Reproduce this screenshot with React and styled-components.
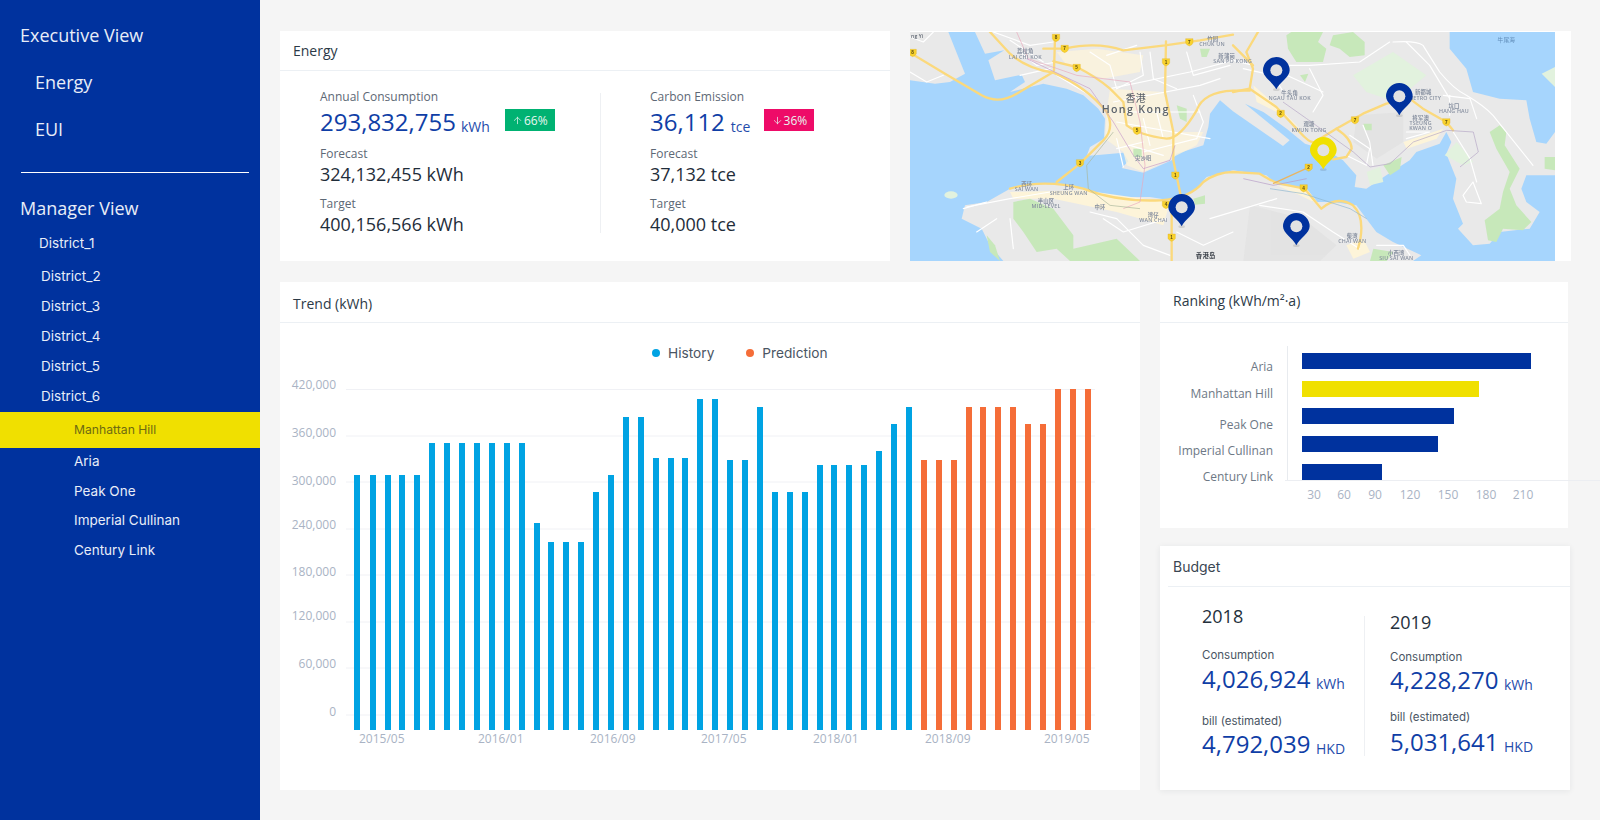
import React from "react";
import styled, { createGlobalStyle } from "styled-components";
import { ArrowUp, ArrowDown } from "lucide-react";

const BLUE = "#00329e";
const YELLOW = "#f0e000";
const SANS = '"Open Sans", "Noto Sans CJK SC", sans-serif';
const UI = 'Inter, "Noto Sans CJK SC", sans-serif';

const GlobalStyle = createGlobalStyle`
  html, body {
    margin: 0;
    padding: 0;
    background: #f5f5f5;
    overflow: hidden;
  }
`;

const Page = styled.div`
  display: flex;
  width: 1600px;
  height: 820px;
  font-family: ${SANS};
`;

const Sidebar = styled.nav`
  width: 260px;
  flex: none;
  box-sizing: border-box;
  padding-top: 12px;
  background: ${BLUE};
  color: #e8edf8;
`;

const NavHead = styled.div`
  margin-left: ${(p) => p.$indent}px;
  font-size: 18px;
  line-height: ${(p) => p.$height}px;
  margin-top: ${(p) => p.$top || 0}px;
`;

const NavRule = styled.hr`
  margin: 19px 11px 0 21px;
  border: none;
  height: 1px;
  background: #ffffff;
`;

const NavItem = styled.div`
  font-family: ${UI};
  font-size: 13.5px;
  line-height: ${(p) => p.$height || 30}px;
  margin-top: ${(p) => p.$top || 0}px;
  padding-left: ${(p) => p.$indent}px;
`;

const NavSub = styled.div`
  font-family: ${UI};
  font-size: 13.5px;
  line-height: ${(p) => p.$height || 30}px;
  padding-left: 74px;
`;

const NavActive = styled(NavSub)`
  margin: 1px 0 -2px;
  font-size: 12.2px;
  background: ${YELLOW};
  color: #6e6a12;
`;

const Main = styled.main`
  flex: 1;
  display: flex;
  flex-direction: column;
  gap: 21px;
  padding: 31px 0 0 20px;
`;

const Row = styled.div`
  display: flex;
  gap: 20px;
`;

const Card = styled.section`
  box-sizing: border-box;
  width: ${(p) => p.$width}px;
  height: ${(p) => p.$height}px;
  background: #ffffff;
`;

const ShadowCard = styled(Card)`
  box-shadow: 0 1px 6px rgba(40, 50, 70, 0.08);
`;

const CardTitle = styled.h2`
  box-sizing: border-box;
  height: ${(p) => p.$height}px;
  margin: 0 0 0 ${(p) => p.$inset || 0}px;
  padding: ${(p) => p.$pad}px 0 0 ${(p) => 13 - (p.$inset || 0)}px;
  border-bottom: 1px solid #ecf0f4;
  font-size: 14px;
  font-weight: 400;
  line-height: 20px;
  color: #2c3a47;
`;

const BudgetTitle = styled(CardTitle)`
  font-family: ${UI};
  font-size: 14px;
  color: #3a4652;
`;

const EnergyBody = styled.div`
  display: grid;
  grid-template-columns: 280px 1px 1fr;
  padding: 18px 0 0 40px;
`;

const Split = styled.div`
  width: 1px;
  margin-top: ${(p) => p.$top}px;
  height: 140px;
  background: #eef0f3;
`;

const StatCol = styled.div`
  padding-left: ${(p) => p.$indent || 0}px;
`;

const StatLabel = styled.div`
  margin-top: ${(p) => p.$top || 0}px;
  font-size: 12px;
  line-height: 16px;
  color: #5d6875;
`;

const StatLine = styled.div`
  display: flex;
  align-items: flex-start;
  margin-top: 2px;
  height: 30px;
`;

const BigValue = styled.span`
  font-size: 24px;
  line-height: 30px;
  color: #0f3ea6;
`;

const Unit = styled.span`
  margin-left: ${(p) => p.$gap || 5.5}px;
  margin-top: 5px;
  font-size: 14px;
  line-height: 30px;
  color: #1f4cab;
`;

const Badge = styled.span`
  display: flex;
  align-items: center;
  justify-content: center;
  gap: 1px;
  width: 50px;
  height: 22px;
  margin-left: ${(p) => p.$gap}px;
  margin-top: 2px;
  background: ${(p) => p.$bg};
  color: #e8f6f0;
  font-size: 12px;
`;

const PlainValue = styled.div`
  font-size: 18px;
  line-height: 24px;
  color: #1f2d3a;
`;

const MapCard = styled(Card)`
  padding-right: 16px;
`;

const MapSvg = styled.svg`
  display: block;
  width: 645px;
  height: 229px;
  margin-top: 1px;
  filter: blur(0.55px);
`;

const Side = styled.div`
  display: flex;
  flex-direction: column;
  gap: 18px;
`;

const Legend = styled.div`
  display: flex;
  align-items: center;
  padding: 21px 0 0 372px;
  height: 18px;
  font-family: ${UI};
  font-size: 13.7px;
  line-height: 18px;
  color: #4a5563;
`;

const LegendDot = styled.i`
  width: 8px;
  height: 8px;
  border-radius: 50%;
  margin: 0 8px 0 ${(p) => p.$gap || 0}px;
  background: ${(p) => p.$color};
`;

const ChartSvg = styled.svg`
  display: block;
  overflow: visible;
`;

const AxisText = styled.text`
  font-family: ${SANS};
  font-size: 12px;
  fill: #a9b3c4;
  dominant-baseline: central;
`;

const RankText = styled(AxisText)`
  fill: #6d7885;
  text-anchor: end;
`;

const BudgetBody = styled.div`
  display: grid;
  grid-template-columns: 162px 1px 1fr;
  padding-left: 42px;
`;

const BudgetYear = styled.div`
  margin-top: ${(p) => p.$top}px;
  font-size: 18px;
  line-height: 24px;
  color: #24303c;
`;

const BudgetLabel = styled.div`
  margin-top: ${(p) => p.$top}px;
  font-family: ${UI};
  font-size: 11.5px;
  line-height: 16px;
  color: #4a5563;
`;

const BudgetValue = styled.div`
  display: flex;
  align-items: flex-start;
  margin-top: ${(p) => p.$top || 0}px;
  height: 30px;
`;

const ShieldText = styled.text`
  font-family: "Liberation Sans", sans-serif;
  font-size: 14px;
  font-weight: 700;
  fill: #5a4a10;
  text-anchor: middle;
`;

const MapLabel = styled.text`
  font-family: ${SANS};
  font-size: ${(p) => p.$size || 16}px;
  font-weight: ${(p) => p.$weight || 600};
  letter-spacing: ${(p) => p.$spacing || 0.6}px;
  fill: ${(p) => p.$color || "#8790a0"};
  text-anchor: ${(p) => p.$anchor || "middle"};
`;

const districts = ["District_3", "District_4", "District_5", "District_6"];

const trendBars = [
  [354, 475], [370, 475], [385, 475], [399, 475], [414, 475],
  [429, 443], [444, 443], [459, 443], [474, 443], [489, 443], [504, 443], [519, 443],
  [534, 523], [548, 542], [563, 542], [578, 542], [593, 492], [608, 475],
  [623, 417], [638, 417], [653, 458], [668, 458], [682, 458], [697, 399], [712, 399],
  [727, 460], [742, 460], [757, 407], [772, 492], [787, 492], [802, 492],
  [817, 465], [831, 465], [846, 465], [861, 465], [876, 451], [891, 424], [906, 407],
];

const predictionBars = [
  [921, 460], [936, 460], [951, 460], [966, 407], [980, 407], [995, 407], [1010, 407],
  [1025, 424], [1040, 424], [1055, 389], [1070, 389], [1085, 389],
];

const yTicks = [
  ["420,000", 389.5, 384], ["360,000", 436, 432], ["300,000", 482, 480], ["240,000", 529, 524],
  ["180,000", 575, 571], ["120,000", 622, 615], ["60,000", 668, 663], ["0", 715, 711],
];

const xTicks = [
  ["2015/05", 359], ["2016/01", 478], ["2016/09", 590], ["2017/05", 701],
  ["2018/01", 813], ["2018/09", 925], ["2019/05", 1044],
];

const rankBars = [
  ["Aria", 353, 1531, BLUE, 366],
  ["Manhattan Hill", 381, 1479, YELLOW, 393],
  ["Peak One", 408, 1454, BLUE, 424],
  ["Imperial Cullinan", 436, 1438, BLUE, 450],
  ["Century Link", 464, 1382, BLUE, 476],
];

const rankTicks = [[30, 1314], [60, 1344], [90, 1375], [120, 1410], [150, 1448], [180, 1486], [210, 1523]];

const shields = [
  [8, 438, 17], [8, 8, 62], [7, 464, 50], [7, 838, 30], [5, 500, 107], [1, 768, 90],
  [5, 681, 296], [3, 510, 393], [1, 796, 430], [4, 768, 518], [1, 785, 616],
  [2, 1112, 245], [7, 1335, 264], [7, 1609, 270], [2, 1196, 406], [4, 1181, 468],
];

const labels = [
  ["荔枝角", 346, 64], ["LAI CHI KOK", 346, 82], ["竹园", 908, 27], ["CHUK UN", 906, 43],
  ["新蒲岗", 950, 79], ["SAN PO KONG", 968, 94], ["尖沙咀", 700, 383], ["西环", 350, 462],
  ["SAI WAN", 350, 478], ["上环", 476, 471], ["SHEUNG WAN", 476, 488], ["半山区", 408, 514],
  ["MID-LEVEL", 408, 529], ["中环", 570, 530], ["湾仔", 730, 554], ["WAN CHAI", 730, 570],
  ["牛头角", 1139, 189], ["NGAU TAU KOK", 1139, 204], ["观塘", 1197, 283], ["KWUN TONG", 1197, 299],
  ["新都城", 1540, 187], ["METRO CITY", 1544, 203], ["坑口", 1632, 229], ["HANG HAU", 1632, 244],
  ["将军澳", 1532, 263], ["TSEUNG", 1532, 279], ["KWAN O", 1532, 294], ["柴湾", 1327, 619],
  ["CHAI WAN", 1327, 634], ["小西湾", 1459, 669], ["SIU SAI WAN", 1459, 684],
];

const yellowRoads = [
  "M0 62 L105 125 L215 190 Q265 218 320 185 L430 120",
  "M240 0 L300 65 Q350 110 430 122 Q530 165 590 240 Q615 290 580 325 L510 395 L440 450",
  "M400 50 L465 50 Q560 28 640 55 L765 40 L870 25 L969 8",
  "M435 20 L432 115",
  "M768 28 L765 180 L790 300 L790 385 L812 490",
  "M430 88 L500 105 Q560 135 600 170 L640 210 L650 280 Q690 310 770 320 Q810 320 860 235 Q880 180 969 176 L1019 176",
  "M300 470 Q400 440 520 470 Q620 510 750 505 Q840 500 880 450 Q920 420 969 420 L1049 425 Q1090 450 1109 455 L1184 470 L1234 530 Q1280 490 1329 520 Q1370 560 1344 650",
  "M1044 0 L1009 60 L1029 110 L1019 170 L969 180",
  "M1019 170 L1099 225 L1169 300 Q1200 335 1214 330 L1279 290 L1359 245 L1429 215 L1499 200 L1539 230 L1609 270 L1629 295",
  "M969 40 L1029 100",
  "M1279 290 Q1325 320 1325 350 L1309 375 L1269 382",
  "M785 520 L785 687",
];

const whiteRoads = [
  "M0 120 L50 150 L100 130", "M600 170 L840 120 L969 85 L1030 100", "M610 210 L870 160 L930 140",
  "M620 320 L640 405", "M640 240 L870 240", "M620 270 L900 320", "M700 360 L860 320",
  "M690 60 L700 130 L620 170", "M540 60 L600 100 L620 170", "M590 70 L680 40", "M720 60 L730 140 L800 170",
  "M830 60 L850 130 L960 100", "M660 340 L760 370", "M620 350 L700 330", "M700 260 L720 340", "M740 240 L760 320",
  "M850 190 L880 270 L860 320", "M250 0 L360 40 L430 30", "M440 90 L380 100 L330 60", "M300 25 L400 90",
  "M0 15 L40 30 L70 0", "M330 130 L420 110", "M440 130 L540 190",
  "M1199 110 L1239 190 L1209 240", "M1439 30 L1349 90 L1199 100 L1129 100", "M1000 110 L1090 130 L1120 180",
  "M1449 30 Q1520 25 1539 40 Q1570 90 1589 120 Q1630 170 1669 190 Q1720 220 1749 250 L1869 400", "M1489 30 L1559 100 L1619 200",
  "M1669 510 L1714 515 L1689 450 L1659 490 Z", "M1630 300 L1680 380 L1700 450", "M1600 190 L1680 200 L1700 260",
  "M1309 370 L1369 400 L1379 350 L1319 310", "M1489 320 L1559 300 L1489 300", "M1359 280 L1379 330 L1389 400",
  "M160 530 L230 510", "M170 525 L300 500 L420 480", "M300 560 L310 650", "M200 600 L260 560", "M580 560 L640 600 L770 560",
  "M800 600 L880 640 L969 600", "M620 560 L700 640 L780 670", "M540 540 L620 560", "M900 560 L1000 530 L1100 500",
  "M1049 520 L1179 540 L1269 600 L1349 650", "M1109 120 L1239 180", "M1619 190 L1619 250", "M1400 640 L1480 640 L1500 670",
];

function MapDrawing() {
  return (
    <MapSvg viewBox="0 0 1935 687" preserveAspectRatio="none">
      <rect width="1935" height="687" fill="#a6d5fd" />
      <g fill="#e9e9e9">
        <path d="M0 0 L115 0 L165 125 L120 150 L75 155 L0 145 Z" />
        <path d="M195 0 L225 65 L283 55 L235 85 L255 145 L335 128 L345 150 L300 180 L400 155 L470 170 L520 190 L565 230 L585 260 L582 320 L540 345 L530 372 L640 362 L655 388 L635 408 L700 422 L785 385 L800 365 L880 340 L895 285 L900 245 L930 205 L969 238 L1119 342 L1139 325 L1005 215 L1060 240 L1130 290 L1185 335 L1250 355 L1299 385 L1339 430 L1334 465 L1369 470 L1429 430 L1499 385 L1519 360 L1589 335 L1609 300 L1624 330 L1609 365 L1639 440 L1629 500 L1659 575 L1644 590 L1689 640 L1739 635 L1769 600 L1859 590 L1889 540 L1849 510 L1834 470 L1849 430 L1935 430 L1935 300 L1909 335 L1879 330 L1859 260 L1849 205 L1769 200 L1689 180 L1669 110 L1619 50 L1619 0 Z" />
        <path d="M165 520 L230 510 L300 470 L400 455 L450 455 L520 470 L610 495 L720 495 L780 505 L850 480 L890 435 L969 415 L1069 430 L1099 455 L1179 470 L1209 510 L1269 510 L1339 520 L1369 560 L1399 600 L1449 630 L1534 670 L1509 687 L280 687 L240 640 L215 590 L155 560 Z" />
      </g>
      <g fill="#e1e1e1" opacity="0.7">
        <path d="M1020 520 L1180 560 L1280 640 L1230 687 L1000 687 Z" />
        <path d="M1340 250 L1480 240 L1480 330 L1400 380 L1330 330 Z" />
      </g>
      <g fill="#fdf4d9">
        <path d="M600 170 L760 180 L790 300 L880 300 L860 340 L780 380 L700 420 L650 400 L640 360 L585 320 L590 240 Z" opacity="0.75" />
        <path d="M300 480 L520 475 L700 500 L780 510 L760 580 L620 540 L430 500 L310 500 Z" />
        <path d="M1030 160 L1110 230 L1180 300 L1120 250 L1040 210 Z" />
        <path d="M1480 330 L1600 290 L1580 320 L1490 350 Z" />
        <path d="M440 60 L560 50 L700 70 L690 120 L580 140 L470 100 Z" opacity="0.75" />
        <path d="M1100 460 L1190 470 L1230 520 L1170 490 Z" />
        <path d="M1309 640 L1360 620 L1380 660 L1330 680 Z" />
      </g>
      <g fill="#c7e8ba">
        <path d="M310 510 L360 500 L430 530 L490 610 L490 650 L620 620 L690 687 L480 687 L440 650 L380 660 L340 600 L310 560 Z" />
        <path d="M230 610 L255 640 L270 687 L240 660 Z" />
        <path d="M1129 10 L1144 0 L1239 0 L1224 30 L1249 50 L1239 90 L1159 90 L1134 50 Z" />
        <path d="M1269 10 L1329 0 L1364 30 L1364 70 L1319 75 L1289 50 L1259 40 Z" />
        <path d="M1739 300 L1769 280 L1789 300 L1784 340 L1829 410 L1799 470 L1819 520 L1864 570 L1839 595 L1779 590 L1759 630 L1734 625 L1724 565 L1769 530 L1779 480 L1799 420 L1759 350 Z" />
        <path d="M1904 375 L1935 375 L1935 415 L1904 410 Z" />
        <path d="M1420 400 L1475 375 L1470 410 L1440 430 Z" />
        <path d="M1170 130 L1195 125 L1185 150 Z" />
        <path d="M1360 275 L1385 275 L1385 295 L1365 295 Z" />
        <path d="M670 350 L695 350 L695 375 L670 375 Z" />
        <path d="M850 500 L885 490 L885 515 L855 518 Z" />
        <path d="M800 220 L830 230 L830 270 L810 260 Z" />
        <path d="M870 50 L900 50 L890 75 L875 75 Z" />
        <path d="M1390 650 L1450 660 L1430 687 L1380 687 Z" />
      </g>
      <g fill="#e2f2de">
        <path d="M1329 130 L1449 60 L1549 130 L1489 180 L1429 200 L1369 180 Z" />
        <path d="M1604 370 L1640 330 L1690 390 L1660 400 Z" />
        <path d="M1895 125 L1935 105 L1935 165 Z" />
        <path d="M1370 420 L1410 405 L1420 450 L1380 460 Z" />
        <ellipse cx="123" cy="489" rx="20" ry="11" />
      </g>
      <g fill="none" stroke="#ffffff" strokeWidth="3.5" strokeLinecap="round" strokeLinejoin="round">
        {whiteRoads.map((d) => (
          <path key={d} d={d} />
        ))}
      </g>
      <g fill="none" stroke="#fbd97c" strokeWidth="7" strokeLinecap="round" strokeLinejoin="round">
        {yellowRoads.map((d) => (
          <path key={d} d={d} />
        ))}
      </g>
      <g fill="none" strokeWidth="2">
        <path d="M320 0 L355 80 L500 130 L660 150 L690 270 L705 400 L690 510 L640 530" stroke="#e9a9bd" />
        <path d="M350 80 L540 170 L610 270 L670 370 L700 410 L780 385 L795 340" stroke="#c79bc9" />
        <path d="M610 300 L530 400 L535 470 L600 520 L690 530" stroke="#a9b69c" />
        <path d="M1119 210 L1190 260 L1330 360 L1380 405 L1440 395 L1510 330 L1610 295 L1690 300 L1705 360 L1650 405" stroke="#b5a6c6" />
        <path d="M1000 440 L1090 460 L1190 440" stroke="#b59ac6" />
        <path d="M1080 470 L1180 485 L1320 530 L1370 560" stroke="#8fb6cf" />
      </g>
      <path d="M1089 455 L1196 406" stroke="#e8b563" strokeWidth="4" fill="none" />
      {shields.map(([n, x, y]) => (
        <g key={`${x}-${y}`}>
          <path d={`M${x - 11} ${y - 10} H${x + 11} V${y + 3} Q${x + 9} ${y + 9} ${x} ${y + 12} Q${x - 9} ${y + 9} ${x - 11} ${y + 3} Z`} fill="#f8d22e" stroke="#e0ad1e" />
          <ShieldText x={x} y={y + 5}>{n}</ShieldText>
        </g>
      ))}
      {labels.map(([t, x, y]) => (
        <MapLabel key={t} x={x} y={y}>{t}</MapLabel>
      ))}
      <MapLabel x={3} y={17} $anchor="start" $color="#5c6470" $size={15}>ng Yi</MapLabel>
      <MapLabel x={677} y={211} $size={30} $weight={400} $color="#565d66">香港</MapLabel>
      <MapLabel x={677} y={244} $size={32} $spacing={4} $color="#5c636c">Hong Kong</MapLabel>
      <MapLabel x={887} y={679} $size={19} $color="#3f454d">香港岛</MapLabel>
      <MapLabel x={1789} y={31} $size={17} $weight={400} $color="#5f8cb8">牛尾海</MapLabel>
      <Pin x={815} y={583} color={BLUE} />
      <Pin x={1099} y={172} color={BLUE} />
      <Pin x={1468} y={250} color={BLUE} />
      <Pin x={1240} y={412} color={YELLOW} />
      <Pin x={1159} y={640} color={BLUE} />
    </MapSvg>
  );
}

function Pin({ x, y, color }) {
  return (
    <g transform={`translate(${x} ${y})`}>
      <ellipse cx="0" cy="1" rx="10" ry="4" fill="#000" opacity="0.1" />
      <path d="M0 0 C-10 -22 -40 -35 -40 -57 A40 40 0 1 1 40 -57 C40 -35 10 -22 0 0 Z" fill={color} />
      <circle cx="0" cy="-57" r="18" fill="#e2e2e2" />
    </g>
  );
}

function TrendChart() {
  return (
    <ChartSvg width="860" height="428" viewBox="280 362 860 428">
      {yTicks.map(([label, line, text]) => (
        <g key={label}>
          <line x1="346" x2="1095" y1={line} y2={line} stroke="#f0f1f5" />
          <AxisText x="336" y={text} textAnchor="end">{label}</AxisText>
        </g>
      ))}
      {trendBars.map(([x, top]) => (
        <rect key={x} x={x} y={top} width="6" height={730 - top} fill="#00a3e3" />
      ))}
      {predictionBars.map(([x, top]) => (
        <rect key={x} x={x} y={top} width="6" height={730 - top} fill="#f56d38" />
      ))}
      {xTicks.map(([label, x]) => (
        <AxisText key={label} x={x} y="738">{label}</AxisText>
      ))}
    </ChartSvg>
  );
}

function RankingChart() {
  return (
    <ChartSvg width="408" height="205" viewBox="1160 323 408 205">
      <line x1="1287.5" x2="1287.5" y1="346" y2="480" stroke="#e8ebef" />
      <line x1="1285" x2="1600" y1="480.5" y2="480.5" stroke="#eceef2" />
      {rankBars.map(([label, y, right, color, textY]) => (
        <g key={label}>
          <rect x="1302" y={y} width={right - 1302} height="16" fill={color} />
          <RankText x="1273" y={textY}>{label}</RankText>
        </g>
      ))}
      {rankTicks.map(([n, x]) => (
        <AxisText key={n} x={x} y="494" textAnchor="middle">{n}</AxisText>
      ))}
    </ChartSvg>
  );
}

export default function App() {
  return (
    <>
      <GlobalStyle />
      <Page>
        <Sidebar>
          <NavHead $indent={20} $height={47}>Executive View</NavHead>
          <NavHead $indent={35} $height={47}>Energy</NavHead>
          <NavHead $indent={35} $height={47}>EUI</NavHead>
          <NavRule />
          <NavHead $indent={20} $height={30} $top={20}>Manager View</NavHead>
          <NavItem $indent={39} $top={5}>District_1</NavItem>
          <NavItem $indent={41} $top={3}>District_2</NavItem>
          {districts.map((d) => (
            <NavItem key={d} $indent={41}>{d}</NavItem>
          ))}
          <NavActive $height={36}>Manhattan Hill</NavActive>
          <NavSub>Aria</NavSub>
          <NavSub>Peak One</NavSub>
          <NavSub $height={29}>Imperial Cullinan</NavSub>
          <NavSub>Century Link</NavSub>
        </Sidebar>
        <Main>
          <Row>
            <Card $width={610} $height={230}>
              <CardTitle $height={40} $pad={10}>Energy</CardTitle>
              <EnergyBody>
                <StatCol>
                  <StatLabel>Annual Consumption</StatLabel>
                  <StatLine>
                    <BigValue>293,832,755</BigValue>
                    <Unit $gap={5}>kWh</Unit>
                    <Badge $bg="#00b272" $gap={15}><ArrowUp size={11} strokeWidth={1.6} />66%</Badge>
                  </StatLine>
                  <StatLabel $top={9}>Forecast</StatLabel>
                  <PlainValue>324,132,455 kWh</PlainValue>
                  <StatLabel $top={10}>Target</StatLabel>
                  <PlainValue>400,156,566 kWh</PlainValue>
                </StatCol>
                <Split $top={4} />
                <StatCol $indent={49}>
                  <StatLabel>Carbon Emission</StatLabel>
                  <StatLine>
                    <BigValue>36,112</BigValue>
                    <Unit $gap={6}>tce</Unit>
                    <Badge $bg="#ee0b68" $gap={14}><ArrowDown size={11} strokeWidth={1.6} />36%</Badge>
                  </StatLine>
                  <StatLabel $top={9}>Forecast</StatLabel>
                  <PlainValue>37,132 tce</PlainValue>
                  <StatLabel $top={10}>Target</StatLabel>
                  <PlainValue>40,000 tce</PlainValue>
                </StatCol>
              </EnergyBody>
            </Card>
            <MapCard $width={661} $height={230}>
              <MapDrawing />
            </MapCard>
          </Row>
          <Row>
            <Card $width={860} $height={508}>
              <CardTitle $height={41} $pad={12}>Trend (kWh)</CardTitle>
              <Legend>
                <LegendDot $color="#00a3e3" />History
                <LegendDot $color="#f56d38" $gap={32} />Prediction
              </Legend>
              <TrendChart />
            </Card>
            <Side>
              <Card $width={408} $height={246}>
                <CardTitle $height={41} $pad={9}>Ranking (kWh/m²·a)</CardTitle>
                <RankingChart />
              </Card>
              <ShadowCard $width={410} $height={244}>
                <BudgetTitle $height={41} $pad={11} $inset={8}>Budget</BudgetTitle>
                <BudgetBody>
                  <StatCol>
                    <BudgetYear $top={17}>2018</BudgetYear>
                    <BudgetLabel $top={19}>Consumption</BudgetLabel>
                    <BudgetValue $top={1}>
                      <BigValue>4,026,924</BigValue>
                      <Unit>kWh</Unit>
                    </BudgetValue>
                    <BudgetLabel $top={19}>bill (estimated)</BudgetLabel>
                    <BudgetValue>
                      <BigValue>4,792,039</BigValue>
                      <Unit>HKD</Unit>
                    </BudgetValue>
                  </StatCol>
                  <Split $top={29} />
                  <StatCol $indent={25}>
                    <BudgetYear $top={23}>2019</BudgetYear>
                    <BudgetLabel $top={15}>Consumption</BudgetLabel>
                    <BudgetValue>
                      <BigValue>4,228,270</BigValue>
                      <Unit>kWh</Unit>
                    </BudgetValue>
                    <BudgetLabel $top={14}>bill (estimated)</BudgetLabel>
                    <BudgetValue $top={2}>
                      <BigValue>5,031,641</BigValue>
                      <Unit>HKD</Unit>
                    </BudgetValue>
                  </StatCol>
                </BudgetBody>
              </ShadowCard>
            </Side>
          </Row>
        </Main>
      </Page>
    </>
  );
}
